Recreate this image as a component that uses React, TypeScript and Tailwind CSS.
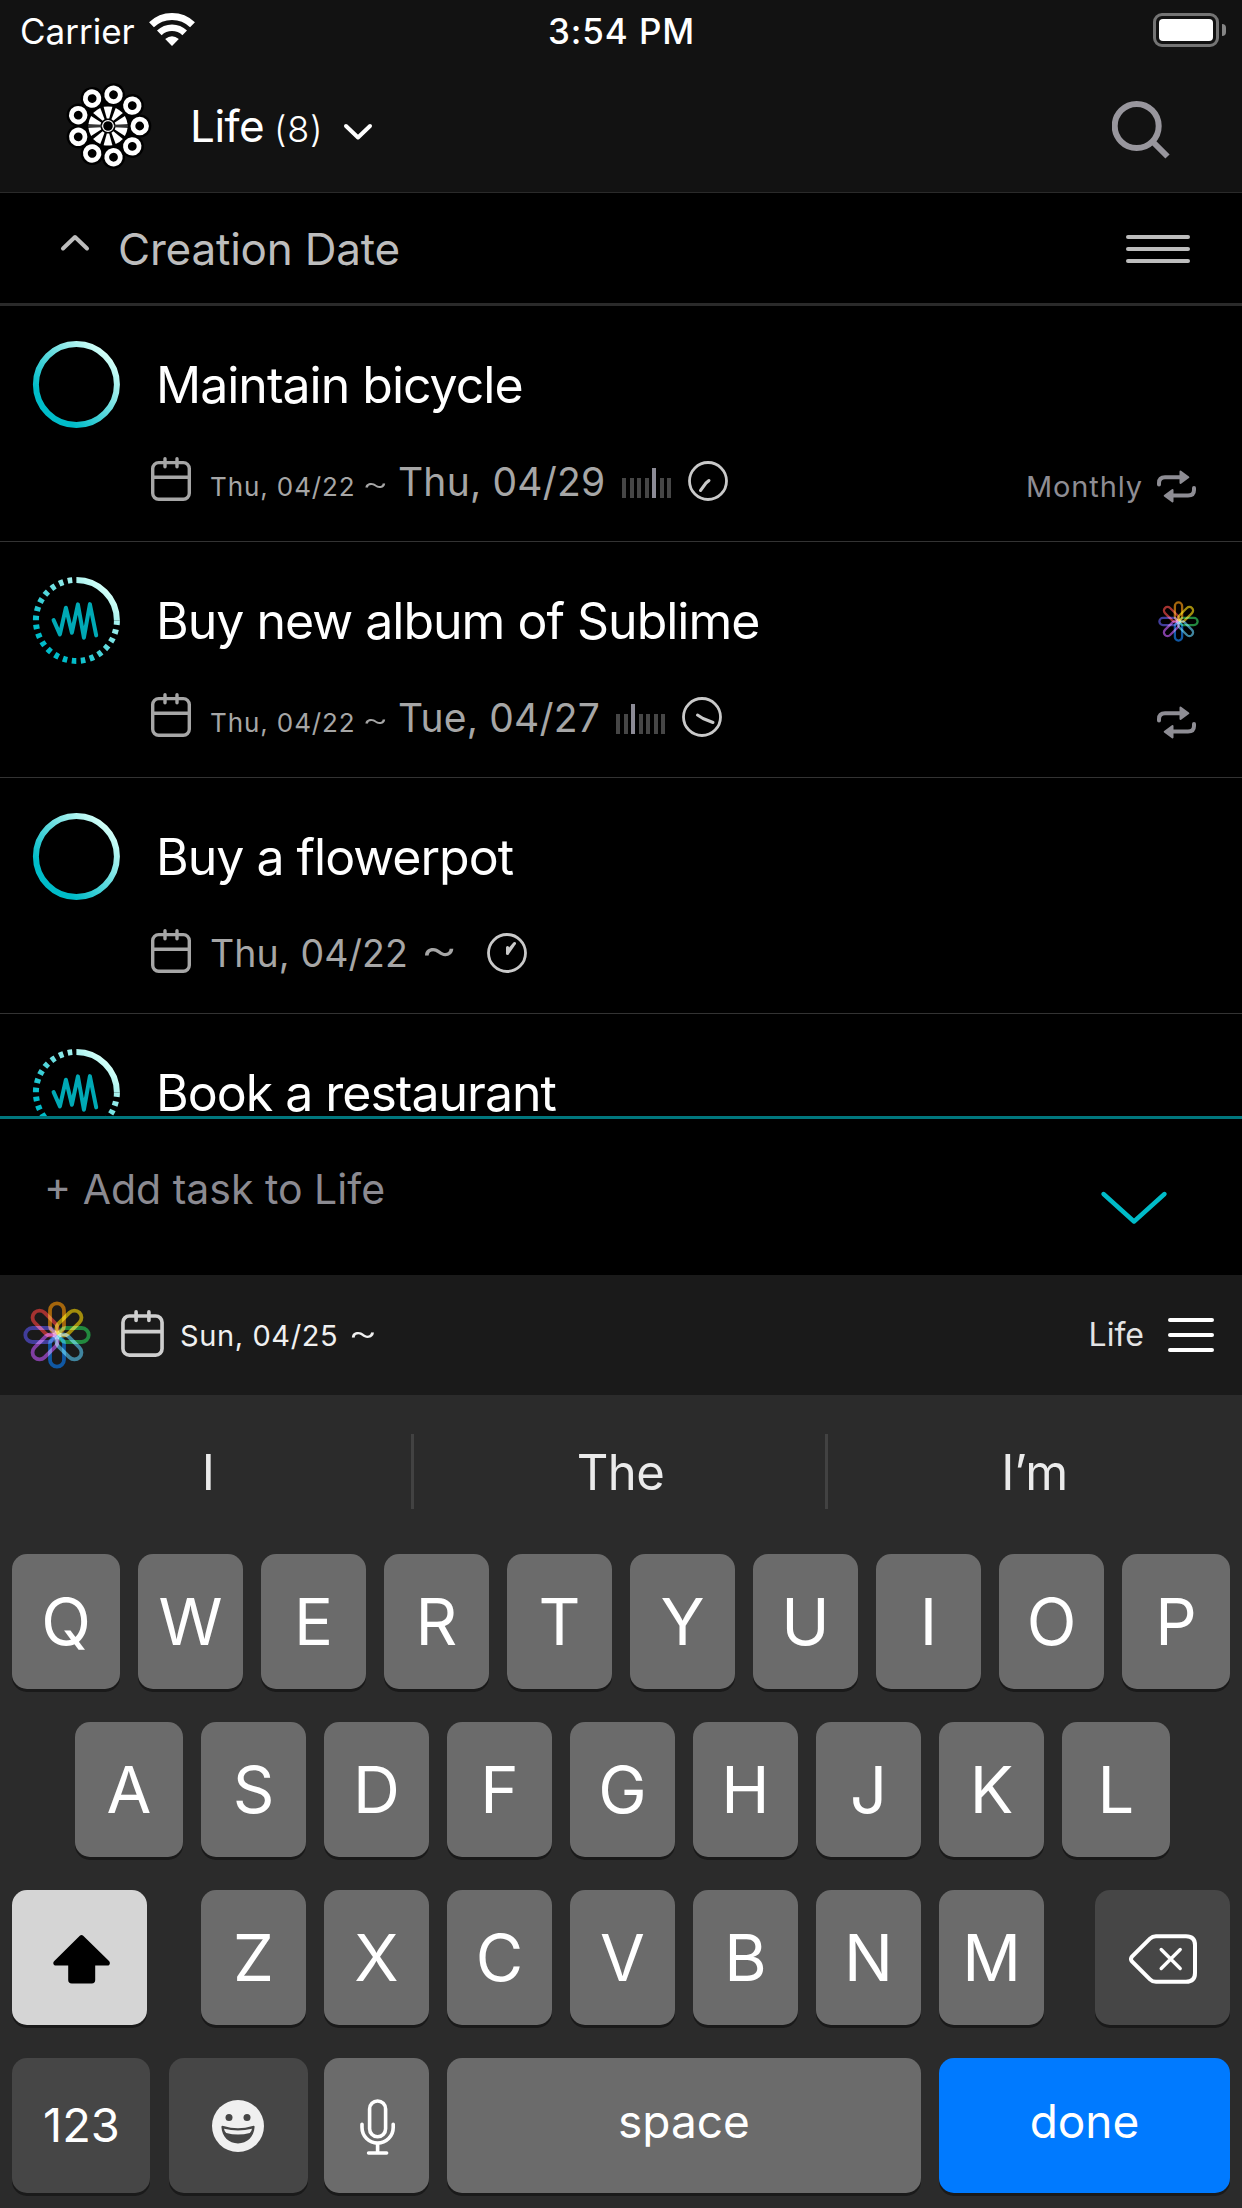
import type { ReactNode } from "react";

const PETALS = ["#a5660c", "#a28c0c", "#22883e", "#40859f", "#1058a4", "#803ea2", "#413d9a", "#a33230"];

type Task = {
  title: string;
  pending?: boolean;
  start?: string;
  due?: string;
  dueWidth?: string;
  weekday?: number;
  hand?: string;
  repeat?: string;
  flower?: boolean;
};

const tasks: Task[] = [
  {
    title: "Maintain bicycle",
    start: "Thu, 04/22",
    due: "Thu, 04/29",
    dueWidth: "w-[224px]",
    weekday: 4,
    hand: "M21 19.5L18 22L12.5 29.5",
    repeat: "Monthly",
  },
  {
    title: "Buy new album of Sublime",
    pending: true,
    start: "Thu, 04/22",
    due: "Tue, 04/27",
    dueWidth: "w-[218px]",
    weekday: 2,
    hand: "M15.5 18L21 21.5L31 25.5",
    repeat: "",
    flower: true,
  },
  { title: "Buy a flowerpot", start: "Thu, 04/22", hand: "M20.5 20.5V14.5L21.5 17.5L27.5 10.5L20.5 20.5" },
  { title: "Book a restaurant", pending: true },
];

function Flower({ size, petal = 14 }: { size: number; petal?: number }) {
  return (
    <svg width={size} height={size} viewBox="-34 -34 68 68" className="isolate shrink-0">
      {PETALS.map((color, i) => (
        <rect
          key={color}
          x={-petal / 2}
          y="-31.7"
          width={petal}
          height="29.7"
          rx={petal / 2}
          fill="none"
          stroke={color}
          strokeWidth="3.8"
          transform={`rotate(${i * 45})`}
          className="mix-blend-screen"
        />
      ))}
    </svg>
  );
}

function Logo() {
  const rings = Array.from({ length: 9 }, (_, i) => i * 40);
  const wedges = Array.from({ length: 10 }, (_, i) => i * 36);
  return (
    <svg width="88" height="88" viewBox="-44 -44 88 88" className="shrink-0">
      <circle r="27" fill="#000" />
      {rings.map((a) => (
        <circle key={a} cx="31.7" r="11.6" fill="#000" transform={`rotate(${a})`} />
      ))}
      {rings.map((a) => (
        <circle key={a} cx="31.7" r="6.8" fill="#000" stroke="#fff" strokeWidth="4.8" transform={`rotate(${a})`} />
      ))}
      {wedges.map((a) => (
        <path key={a} d="M-1.2 -7.5L-4.4 -19.2Q0 -20 4.4 -19.2L1.2 -7.5Z" fill="#fff" transform={`rotate(${a})`} />
      ))}
      <path d="M-20 0H20" stroke="#999" strokeWidth="0.7" />
      <circle r="5.4" fill="#000" stroke="#fff" strokeWidth="1.2" />
    </svg>
  );
}

function StatusRing({ pending }: { pending?: boolean }) {
  return (
    <svg width="88" height="88" viewBox="-44.4 -44.4 88 88" className="shrink-0">
      <defs>
        <linearGradient id="ring" gradientUnits="userSpaceOnUse" x1="-22" y1="22" x2="30" y2="-30">
          <stop offset="0" stopColor="#00bcc9" />
          <stop offset="1" stopColor="#d2fff8" />
        </linearGradient>
      </defs>
      {pending ? (
        <g fill="none">
          <path d="M0 -40.5A40.5 40.5 0 0 1 40.5 0" stroke="url(#ring)" strokeWidth="6" />
          <path
            d="M40.5 0A40.5 40.5 0 1 1 0 -40.5"
            stroke="url(#ring)"
            strokeWidth="6"
            strokeDasharray="4.54 4.55"
          />
          <path
            d="M-22.8 -0.3L-16.5 14L-10.5 -12.7L-4.5 12.3L1.5 -16L7.5 17.3L13.5 -16.3L19.8 15"
            stroke="#00a9b5"
            strokeWidth="4"
            strokeLinecap="round"
            strokeLinejoin="round"
          />
        </g>
      ) : (
        <circle r="40.5" fill="none" stroke="url(#ring)" strokeWidth="6" />
      )}
    </svg>
  );
}

function Calendar({ className }: { className: string }) {
  return (
    <svg viewBox="0 0 40 44" fill="none" stroke="currentColor" strokeWidth="3.4" className={className}>
      <rect x="1.7" y="5.6" width="36.6" height="36.6" rx="6" />
      <path d="M1.7 20.3H38.3" />
      <path d="M14 1.8V9.8M26 1.8V9.8" strokeLinecap="round" />
    </svg>
  );
}

function Clock({ hand }: { hand: string }) {
  return (
    <svg width="40" height="40" viewBox="0 0 40 40" fill="none" stroke="#c9c9c9" className="shrink-0">
      <circle cx="20" cy="20" r="18.5" strokeWidth="2.8" />
      <path d={hand} strokeWidth="3" strokeLinecap="round" strokeLinejoin="round" />
    </svg>
  );
}

function WeekBars({ active }: { active: number }) {
  return (
    <div className="flex h-[30px] items-end gap-[3.5px]">
      {Array.from({ length: 7 }, (_, i) => (
        <div key={i} className={i === active ? "h-[30px] w-1 bg-[#8c8b96]" : "h-5 w-1 bg-[#464646]"} />
      ))}
    </div>
  );
}

function Repeat() {
  return (
    <svg width="39" height="33" viewBox="0 0 39 33" className="shrink-0 text-[#8e8d94]">
      <g fill="none" stroke="currentColor" strokeWidth="4" strokeLinecap="round">
        <path d="M2 14.5V13Q2 7.2 8 7.2H24" />
        <path d="M37 18V20Q37 25.6 31 25.6H15" />
      </g>
      <g fill="currentColor" stroke="currentColor" strokeWidth="2" strokeLinejoin="round">
        <path d="M23.5 1.6L31.3 7.3L23.5 13Z" />
        <path d="M15.5 20L7.7 25.7L15.5 31.4Z" />
      </g>
    </svg>
  );
}

function TaskRow({ task }: { task: Task }) {
  return (
    <div className="flex h-[236px] shrink-0 border-b border-[#333333] pr-[46px] pl-8">
      <div className="mt-[34px]">
        <StatusRing pending={task.pending} />
      </div>
      <div className="flex flex-1 flex-col">
        <div className="mt-14 flex h-12 items-start pl-9">
          <span className="text-[50px] leading-[46px] tracking-[-1px] whitespace-nowrap text-white">{task.title}</span>
          {task.flower && (
            <div className="mt-[3px] mr-[-3px] ml-auto">
              <Flower size={41} petal={12} />
            </div>
          )}
        </div>
        {task.start && (
          <div className="mt-[47px] flex h-11 items-start pl-[31px] text-[#a6a6a6]">
            <Calendar className="h-11 w-10" />
            {task.due ? (
              <>
                <span className="mt-[17px] ml-[19px] w-[152px] text-[26px] leading-[26px] tracking-[0.9px] whitespace-nowrap">
                  {task.start}
                </span>
                <span className="mt-[9px] w-[36px] origin-left scale-x-120 text-[34px] leading-[34px] font-light">~</span>
                <span className={`mt-[5px] text-[39px] leading-[39px] tracking-[0.2px] whitespace-nowrap ${task.dueWidth}`}>
                  {task.due}
                </span>
                <div className="mt-[11px]">
                  <WeekBars active={task.weekday ?? 0} />
                </div>
                <div className="mt-1 ml-[17px]">
                  <Clock hand={task.hand ?? ""} />
                </div>
              </>
            ) : (
              <>
                <span className="mt-[6px] ml-[19px] w-[210px] text-[37.5px] leading-[38px] tracking-[0.1px] whitespace-nowrap">
                  {task.start}
                </span>
                <span className="mt-[-6px] w-[67px] origin-left scale-x-115 text-[51px] leading-[51px] font-light">~</span>
                <div className="mt-1">
                  <Clock hand={task.hand ?? ""} />
                </div>
              </>
            )}
            {task.repeat !== undefined && (
              <div className="mt-[13px] ml-auto flex items-start gap-[14px]">
                <span className="mt-[2px] text-[29px] leading-[29px] tracking-[0.9px] text-[#8e8d94]">{task.repeat}</span>
                <Repeat />
              </div>
            )}
          </div>
        )}
      </div>
    </div>
  );
}

function Header() {
  return (
    <header className="h-[193px] border-b border-[#2a2a2a] bg-[#121212] text-white">
      <div className="grid h-[62px] grid-cols-3 pr-4 pl-5">
        <div className="flex items-start">
          <span className="mt-[14px] w-[129px] text-[35px] leading-[35px]">Carrier</span>
          <svg width="46" height="34" viewBox="-23 -33 46 34" className="mt-[13px]" fill="none" stroke="#fff">
            <path d="M-20.5 -21.2A29.5 29.5 0 0 1 20.5 -21.2" strokeWidth="7" />
            <path d="M-12.7 -13.1A18.3 18.3 0 0 1 12.7 -13.1" strokeWidth="6.6" />
            <path d="M0 0L-6.8 -7Q0 -12.6 6.8 -7Z" fill="#fff" stroke="none" />
          </svg>
        </div>
        <span className="mt-[14px] pr-[3px] text-center text-[35px] leading-[35px] font-medium tracking-[0.9px]">
          3:54 PM
        </span>
        <div className="mt-[13px] flex h-[34px] items-center justify-end gap-[3px]">
          <div className="h-[34px] w-[66px] rounded-[9px] border-3 border-[#747474] p-[3px]">
            <div className="h-full rounded-[4px] bg-white" />
          </div>
          <div className="h-3 w-1 rounded-r-full bg-[#858585]" />
        </div>
      </div>
      <div className="flex items-start pr-[70px] pl-16">
        <div className="mt-5">
          <Logo />
        </div>
        <span className="mt-[42px] ml-[38px] w-[84px] text-[44px] leading-[44px] tracking-[-0.5px]">Life</span>
        <span className="mt-[49px] w-[69px] text-[36px] leading-[36px] font-light tracking-[0.7px]">(8)</span>
        <svg width="30" height="18" viewBox="0 0 30 18" fill="none" stroke="#fff" className="mt-[61px]">
          <path d="M3 3L15 14.5L27 3" strokeWidth="4" strokeLinecap="round" strokeLinejoin="round" />
        </svg>
        <svg width="60" height="60" viewBox="0 0 60 60" fill="none" stroke="#98969d" strokeWidth="6" className="mt-[38px] ml-auto">
          <circle cx="24.7" cy="26" r="22" />
          <path d="M40.5 41.5L55.5 56.5" />
        </svg>
      </div>
    </header>
  );
}

function SortBar() {
  return (
    <div className="flex h-[113px] items-start border-b-3 border-[#2a2a2a] pr-[52px] pl-[60px]">
      <svg width="30" height="18" viewBox="0 0 30 18" fill="none" stroke="#bdbdbd" className="mt-[41px]">
        <path d="M3 14.5L15 3L27 14.5" strokeWidth="4" strokeLinecap="round" strokeLinejoin="round" />
      </svg>
      <span className="mt-[34px] ml-[28px] text-[44px] leading-[44px] tracking-[-0.2px] text-[#bdbdbd]">
        Creation Date
      </span>
      <div className="mt-[42px] ml-auto flex w-16 flex-col gap-2">
        <div className="h-1 rounded-full bg-[#bdbdbd]" />
        <div className="h-1 rounded-full bg-[#bdbdbd]" />
        <div className="h-1 rounded-full bg-[#bdbdbd]" />
      </div>
    </div>
  );
}

function Composer() {
  return (
    <>
      <div className="flex h-[159px] items-start border-t-3 border-[#00767d] pr-[74px] pl-[44px]">
        <span className="mt-[50px] text-[41px] leading-[41px] text-[#8b8a91]">+ Add task to Life</span>
        <svg width="68" height="36" viewBox="0 0 68 36" fill="none" stroke="#00bcc9" className="mt-[71px] ml-auto">
          <path d="M3.5 4L34 31.5L64.5 4" strokeWidth="4.4" strokeLinecap="round" strokeLinejoin="round" />
        </svg>
      </div>
      <div className="flex h-[120px] items-start bg-[#1a1a1a] pr-7 pl-[23px]">
        <div className="mt-[26px]">
          <Flower size={68} />
        </div>
        <Calendar className="mt-[35px] ml-[30px] h-[47px] w-[43px] text-[#cfcfcf]" />
        <span className="mt-[46px] ml-4 w-[168px] text-[29px] leading-[29px] tracking-[0.6px] whitespace-nowrap text-[#f0f0f0]">
          Sun, 04/25
        </span>
        <span className="mt-[38px] origin-left scale-x-120 text-[38px] leading-[38px] font-light text-[#f0f0f0]">~</span>
        <span className="mt-[44px] mr-[24px] ml-auto text-[32px] leading-[32px] text-[#e4e4e4]">Life</span>
        <div className="mt-[43px] flex w-[46px] flex-col gap-[11px]">
          <div className="h-1 rounded-full bg-white" />
          <div className="h-1 rounded-full bg-white" />
          <div className="h-1 rounded-full bg-white" />
        </div>
      </div>
    </>
  );
}

function Key({ children, className = "w-[105px] bg-[#6b6b6b]" }: { children: ReactNode; className?: string }) {
  return (
    <div
      className={`flex h-[135px] shrink-0 justify-center rounded-[15px] text-white shadow-[0_3px_0_#1a1a1a] ${className}`}
    >
      {children}
    </div>
  );
}

function Letter({ char, wide }: { char: string; wide?: boolean }) {
  return (
    <Key className={wide ? "w-[108px] bg-[#6b6b6b]" : "w-[105px] bg-[#6b6b6b]"}>
      <span className="mt-[35px] text-[65px] leading-[65px]">{char}</span>
    </Key>
  );
}

function Keyboard() {
  const suggestions = [
    { word: "I", cell: "w-[399px] pr-[7px]" },
    { word: "The", cell: "w-[417px] border-x-3 border-[#424242] pl-[2px]" },
    { word: "I’m", cell: "flex-1 pl-[11px]" },
  ];
  return (
    <div className="h-[813px] bg-[#2b2b2b] px-3">
      <div className="flex h-[159px] items-start pt-[39px]">
        {suggestions.map(({ word, cell }) => (
          <div key={word} className={`h-[75px] text-center ${cell}`}>
            <p className="mt-[14px] text-[49px] leading-[49px] tracking-[-0.5px] text-[#ebebeb]">{word}</p>
          </div>
        ))}
      </div>
      <div className="flex flex-col gap-[33px]">
        <div className="flex justify-between">
          {[..."QWERTYUIOP"].map((c) => (
            <Letter key={c} char={c} wide={c === "Q" || c === "P"} />
          ))}
        </div>
        <div className="flex justify-between pr-[60px] pl-[63px]">
          {[..."ASDFGHJKL"].map((c) => (
            <Letter key={c} char={c} wide={c === "A" || c === "L"} />
          ))}
        </div>
        <div className="flex justify-between">
          <Key className="w-[135px] bg-[#d5d5d5]">
            <svg width="58" height="50" viewBox="0 0 58 50" className="mt-11 ml-[5px]">
              <path d="M26.8 1.8Q28.5 0.2 30.2 1.8L56 27Q58 29.5 55.5 31.6H42.2V46Q42.2 49.4 38.8 49.4H18.8Q15.2 49.4 15.2 46V31.6H1.8Q-1 29.5 1.3 27Z" />
            </svg>
          </Key>
          <div className="flex gap-[18px] pl-[3px]">
            {[..."ZXCVBNM"].map((c) => (
              <Letter key={c} char={c} />
            ))}
          </div>
          <Key className="w-[135px] bg-[#464646]">
            <svg width="68" height="50" viewBox="0 0 68 50" fill="none" stroke="#fff" className="mt-11" strokeLinecap="round">
              <path
                d="M27 2.2H57Q66 2.2 66 11V39Q66 47.8 57 47.8H27Q23.5 47.8 21 45.3L3 27.5Q1 25 3 22.5L21 4.7Q23.5 2.2 27 2.2Z"
                strokeWidth="4"
              />
              <path d="M32.2 15.5L51.2 34.5M51.2 15.5L32.2 34.5" strokeWidth="3.4" />
            </svg>
          </Key>
        </div>
        <div className="flex">
          <Key className="w-[138px] bg-[#464646]">
            <span className="mt-[43px] pl-px text-[47px] leading-[47px]">123</span>
          </Key>
          <Key className="ml-[19px] w-[139px] bg-[#464646]">
            <svg width="52" height="52" viewBox="0 0 52 52" className="mt-[42px] mr-px">
              <circle cx="26" cy="26" r="26" fill="#f0f0f0" />
              <circle cx="17" cy="17.5" r="3.5" fill="#464646" />
              <circle cx="35" cy="17.5" r="3.5" fill="#464646" />
              <path d="M9.4 27Q9.4 25.4 11.5 26Q26 30.4 40.5 26Q42.8 25.4 42.6 27C42 37 35 43.4 26 43.4S10 37 9.4 27Z" fill="#464646" />
              <path d="M12 28.8Q26 32.4 40 28.8Q39.6 31.4 37.8 33Q26 36.2 14.2 33Q12.4 31.4 12 28.8Z" fill="#f0f0f0" />
            </svg>
          </Key>
          <Key className="ml-4 w-[105px] bg-[#6b6b6b]">
            <svg width="35" height="58" viewBox="0 0 35 58" fill="none" stroke="#fff" strokeWidth="3.6" strokeLinecap="round" className="mt-[41px] ml-[2px]">
              <rect x="9.6" y="2" width="16" height="35.8" rx="8" />
              <path d="M2 25.2V28.5A15.6 15.6 0 0 0 33.2 28.5V25.2" />
              <path d="M17.6 45V53M8.6 54H26.6" />
            </svg>
          </Key>
          <Key className="ml-[18px] w-[474px] bg-[#6b6b6b]">
            <span className="mt-[40px] text-[46px] leading-[46px]">space</span>
          </Key>
          <Key className="ml-[18px] w-[291px] bg-[#007aff]">
            <span className="mt-[40px] text-[46px] leading-[46px]">done</span>
          </Key>
        </div>
      </div>
    </div>
  );
}

export default function App() {
  return (
    <div className="flex h-[2208px] w-[1242px] flex-col overflow-hidden bg-black font-['Inter','Liberation_Sans',sans-serif]">
      <Header />
      <SortBar />
      <div className="flex h-[810px] flex-col overflow-hidden">
        {tasks.map((task) => (
          <TaskRow key={task.title} task={task} />
        ))}
      </div>
      <Composer />
      <Keyboard />
    </div>
  );
}
